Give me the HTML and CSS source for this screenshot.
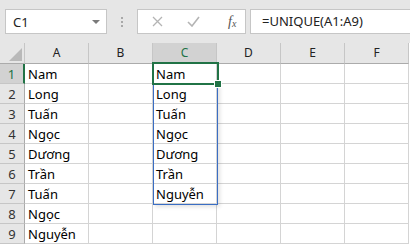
FILE: index.html
```html
<!DOCTYPE html>
<html lang="vi">
<head>
  <meta charset="UTF-8">
  <title>UNIQUE</title>
  <link rel="stylesheet" href="styles.css">
</head>
<body>
  <div class="toolbar">
    <div class="namebox">
      <span>C1</span>
      <svg class="caret" width="8" height="4" viewBox="0 0 8 4"><path d="M0 0h8L4 4z" fill="#7a7a7a"/></svg>
    </div>
    <div class="grip">
      <i></i><i></i><i></i>
    </div>
    <div class="buttons">
      <svg width="11" height="11" viewBox="0 0 11 11"><path d="M1 1l9 9M10 1l-9 9" stroke="#b4b4b4" stroke-width="1.3" fill="none"/></svg>
      <svg width="13" height="11" viewBox="0 0 13 11"><path d="M1 6l4 4 7-9" stroke="#b4b4b4" stroke-width="1.6" fill="none"/></svg>
      <span class="fx">f<sub>x</sub></span>
    </div>
    <div class="formula">=UNIQUE(A1:A9)</div>
  </div>

  <div class="sheet">
    <div class="corner"><svg width="13" height="13" viewBox="0 0 13 13"><path d="M13 0v13H0z" fill="#b9b9b9"/></svg></div>
    <div class="col">A</div>
    <div class="col">B</div>
    <div class="col active">C</div>
    <div class="col">D</div>
    <div class="col">E</div>
    <div class="col">F</div>

    <div class="row active">1</div><div class="cell">Nam</div><div class="cell"></div><div class="cell">Nam</div><div class="cell"></div><div class="cell"></div><div class="cell"></div>
    <div class="row">2</div><div class="cell">Long</div><div class="cell"></div><div class="cell">Long</div><div class="cell"></div><div class="cell"></div><div class="cell"></div>
    <div class="row">3</div><div class="cell">Tuấn</div><div class="cell"></div><div class="cell">Tuấn</div><div class="cell"></div><div class="cell"></div><div class="cell"></div>
    <div class="row">4</div><div class="cell">Ngọc</div><div class="cell"></div><div class="cell">Ngọc</div><div class="cell"></div><div class="cell"></div><div class="cell"></div>
    <div class="row">5</div><div class="cell">Dương</div><div class="cell"></div><div class="cell">Dương</div><div class="cell"></div><div class="cell"></div><div class="cell"></div>
    <div class="row">6</div><div class="cell">Trần</div><div class="cell"></div><div class="cell">Trần</div><div class="cell"></div><div class="cell"></div><div class="cell"></div>
    <div class="row">7</div><div class="cell">Tuấn</div><div class="cell"></div><div class="cell">Nguyễn</div><div class="cell"></div><div class="cell"></div><div class="cell"></div>
    <div class="row">8</div><div class="cell">Ngọc</div><div class="cell"></div><div class="cell"></div><div class="cell"></div><div class="cell"></div><div class="cell"></div>
    <div class="row">9</div><div class="cell">Nguyễn</div><div class="cell"></div><div class="cell"></div><div class="cell"></div><div class="cell"></div><div class="cell"></div>

    <div class="spill"></div>
    <div class="selection"><span class="handle"></span></div>
  </div>
</body>
</html>
```

FILE: styles.css
```css
body {
  margin: 0;
  background-color: #ffffff;
  font-family: "Noto Sans", "Liberation Sans", sans-serif;
  width: 410px;
  height: 246px;
  overflow: hidden;
}
.toolbar {
  height: 43px;
  background-color: #e6e6e6;
  display: flex;
  align-items: flex-start;
  padding-top: 9px;
  box-sizing: border-box;
}
.namebox {
  margin-left: 5px;
  width: 102px;
  height: 25px;
  box-sizing: border-box;
  background-color: white;
  border: 1px solid #c6c6c6;
  display: flex;
  align-items: center;
  justify-content: space-between;
  padding: 0 6px 0 7px;
  font-size: 13px;
  color: #222;
}
.caret {
  margin-top: 1px;
}
.grip {
  width: 30px;
  height: 25px;
  display: flex;
  flex-direction: column;
  align-items: center;
  justify-content: center;
  gap: 2px;
}
.grip i {
  width: 2px;
  height: 2px;
  background-color: #a8a8a8;
}
.buttons {
  width: 109px;
  height: 25px;
  box-sizing: border-box;
  background-color: white;
  border: 1px solid #c6c6c6;
  display: flex;
  align-items: center;
  padding-left: 14px;
  gap: 24px;
}
.fx {
  font-family: "Liberation Serif", serif;
  font-style: italic;
  font-size: 14px;
  color: #555;
  margin-left: 4px;
}
.fx sub {
  font-size: 10px;
  vertical-align: -1px;
}
.formula {
  margin-left: 4px;
  flex: 1;
  height: 25px;
  box-sizing: border-box;
  background-color: white;
  border: 1px solid #c6c6c6;
  border-right: none;
  padding-left: 11px;
  font-size: 13px;
  line-height: 23px;
  color: #222;
}
.sheet {
  position: relative;
  display: grid;
  grid-template-columns: 25px repeat(6, 64px);
  grid-template-rows: 21px;
  grid-auto-rows: 20px;
}
.sheet > div {
  box-sizing: border-box;
}
.corner {
  background-color: #e6e6e6;
  border-right: 1px solid #c6c6c6;
  border-bottom: 1px solid #ababab;
  display: flex;
  align-items: flex-end;
  justify-content: flex-end;
  padding: 0 2px 2px 0;
}
.col {
  background-color: #e6e6e6;
  border-right: 1px solid #c6c6c6;
  border-bottom: 1px solid #ababab;
  font-size: 12px;
  text-align: center;
  line-height: 20px;
  color: #222;
}
.col.active {
  background-color: #d2d2d2;
  color: #217346;
  border-bottom: 2px solid #217346;
}
.row {
  background-color: #e6e6e6;
  border-right: 1px solid #ababab;
  border-bottom: 1px solid #c6c6c6;
  font-size: 13px;
  text-align: center;
  line-height: 20px;
  color: #333;
}
.row.active {
  background-color: #d2d2d2;
  color: #217346;
  border-right: 2px solid #217346;
}
.cell {
  border-right: 1px solid #d4d4d4;
  border-bottom: 1px solid #d4d4d4;
  font-size: 13px;
  line-height: 20px;
  padding-left: 3px;
  color: #000;
  white-space: nowrap;
}
.spill {
  position: absolute;
  left: 153px;
  top: 41px;
  width: 65px;
  height: 121px;
  border: 1px solid #3a6ec4;
  box-sizing: border-box;
  box-shadow: 2px 2px 4px rgba(0, 0, 0, 0.12);
}
.selection {
  position: absolute;
  left: 152px;
  top: 19px;
  width: 67px;
  height: 23px;
  border: 2px solid #217346;
  box-sizing: border-box;
}
.handle {
  position: absolute;
  right: -5px;
  bottom: -5px;
  width: 6px;
  height: 6px;
  background-color: #217346;
  border: 1px solid white;
}
```
